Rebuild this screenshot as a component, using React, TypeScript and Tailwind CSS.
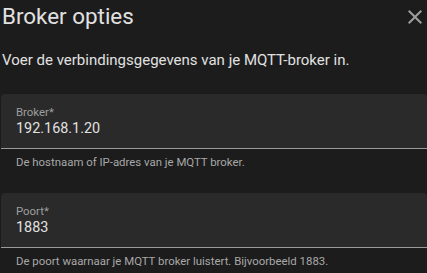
const fields = [
  {
    label: "Broker*",
    value: "192.168.1.20",
    helper: "De hostnaam of IP-adres van je MQTT broker.",
  },
  {
    label: "Poort*",
    value: "1883",
    helper: "De poort waarnaar je MQTT broker luistert. Bijvoorbeeld 1883.",
  },
];

const App = () => {
  return (
    <div className="w-[427px] h-[273px] overflow-hidden bg-[#1c1c1c] font-['Roboto',sans-serif]">
      <div className="flex items-start justify-between">
        <h2 className="mt-[2px] pl-[2px] text-[22.4px] leading-[28px] font-normal text-[#e1e1e1]">
          Broker opties
        </h2>
        <svg viewBox="0 0 24 24" className="mt-[5px] h-6 w-6 fill-[#9e9e9e]">
          <path d="M19 6.41L17.59 5 12 10.59 6.41 5 5 6.41 10.59 12 5 17.59 6.41 19 12 13.41 17.59 19 19 17.59 13.41 12z" />
        </svg>
      </div>
      <p className="mt-[20px] pl-[2px] text-[15px] leading-[20px] text-[#e1e1e1]">
        Voer de verbindingsgegevens van je MQTT-broker in.
      </p>
      <div className="mt-[24px] flex flex-col gap-[23px]">
        {fields.map((f) => (
          <div key={f.label}>
            <div className="ml-[1px] rounded-t-[4px] border-b border-[#9a9a9a] bg-[#2a2a2a] pl-[15px] pt-[11px] pb-[9px]">
              <div className="text-[11.4px] leading-[14px] text-[#9e9e9e]">{f.label}</div>
              <div className="text-[14.4px] leading-[20px] text-[#e1e1e1]">{f.value}</div>
            </div>
            <div className="pl-[16px] pt-[5px] text-[11.4px] leading-[16px] text-[#a8a8a8]">
              {f.helper}
            </div>
          </div>
        ))}
      </div>
    </div>
  );
};

export default App;
